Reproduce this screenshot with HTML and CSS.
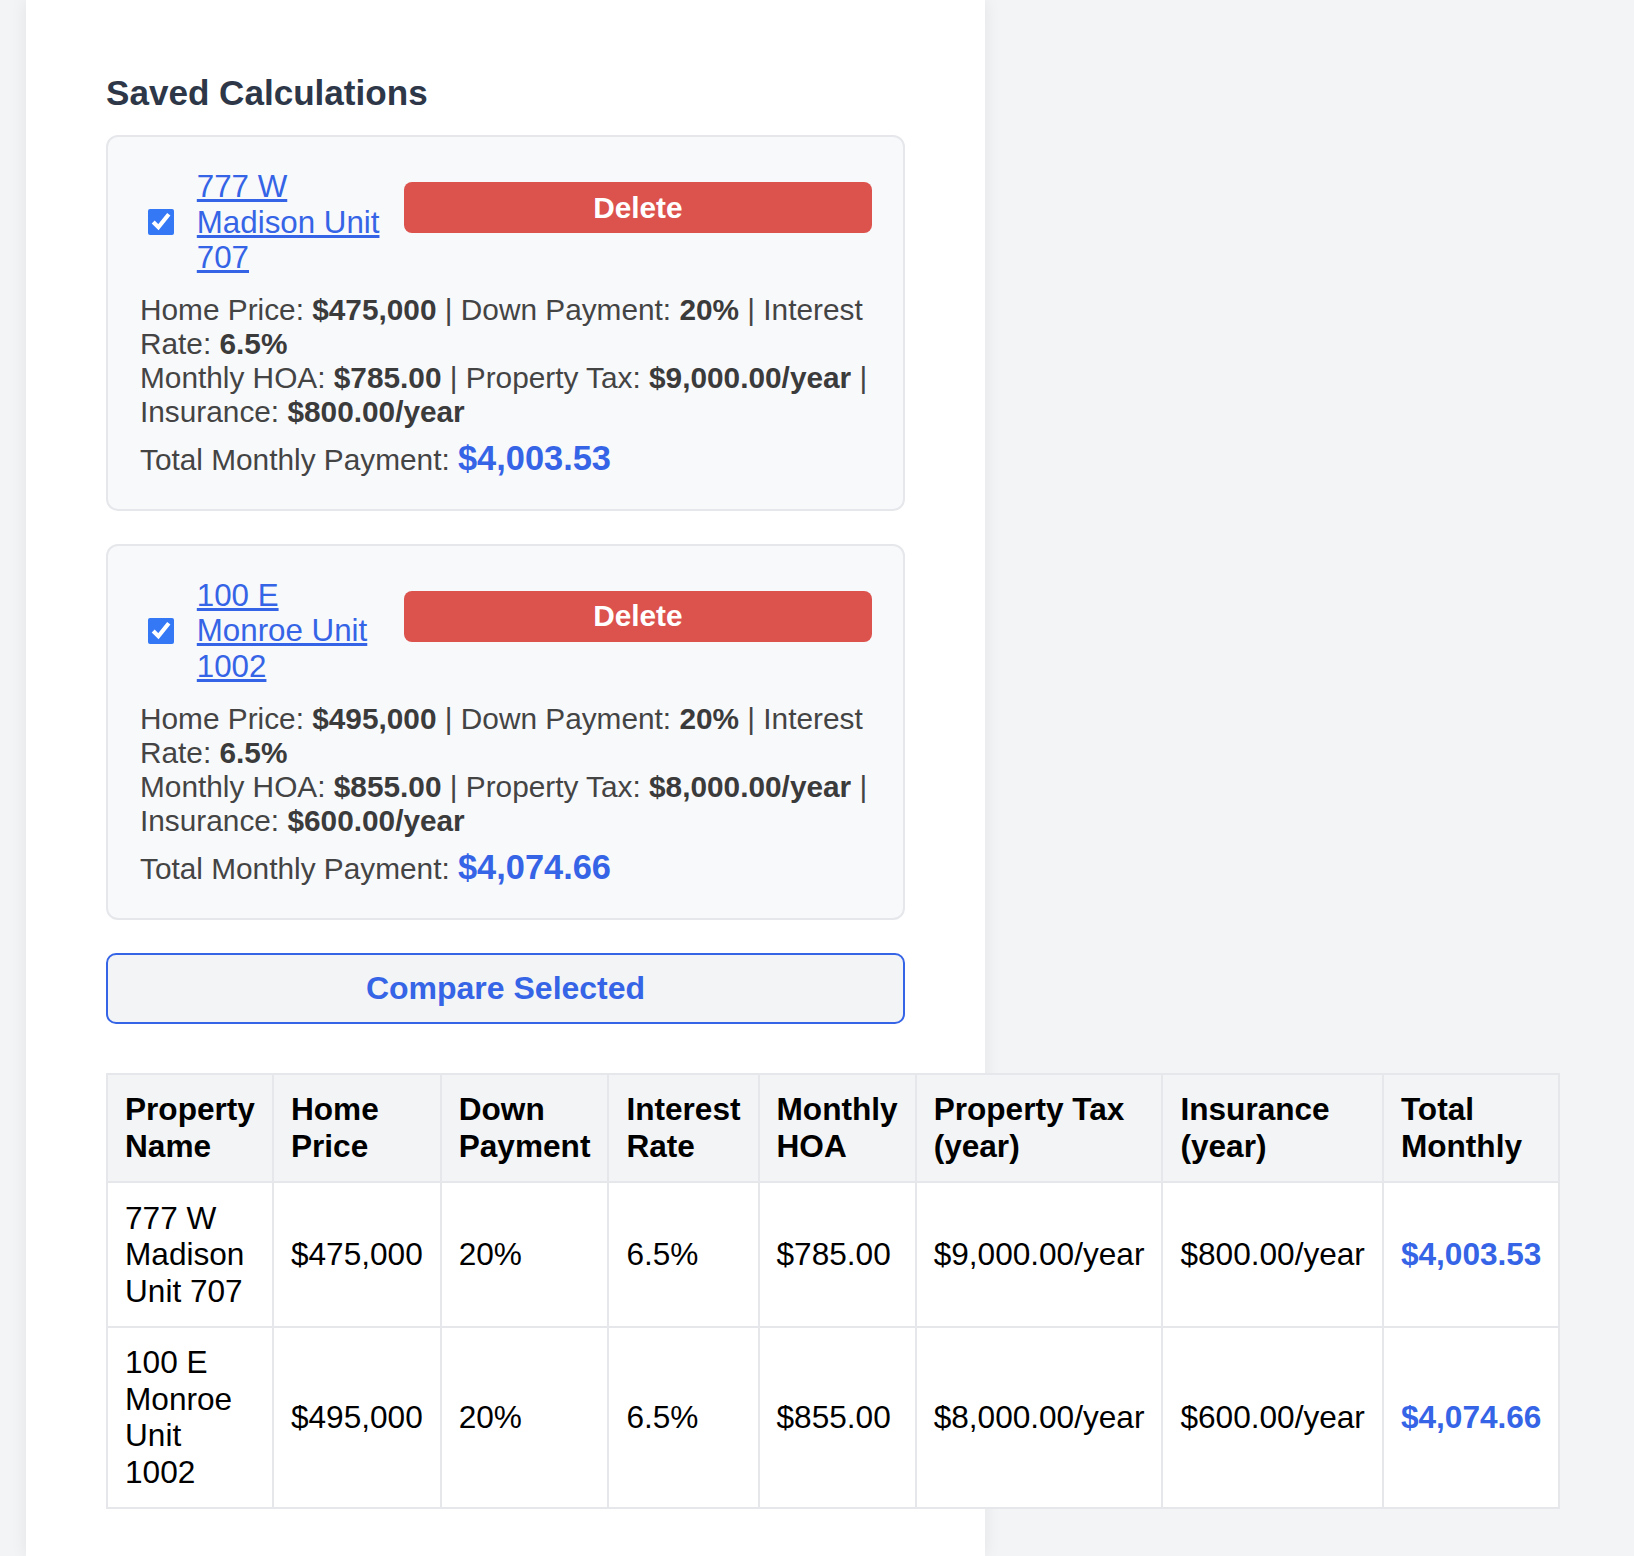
FILE: index.html
```html
<!DOCTYPE html>
<html lang="en">
<head>
<meta charset="utf-8">
<title>Saved Calculations</title>
<link rel="stylesheet" href="styles.css">
</head>
<body>
<main class="panel">
  <h2 class="title">Saved Calculations</h2>

  <div class="card">
    <div class="card-head">
      <label class="pick">
        <input type="checkbox" checked>
        <a href="#" class="prop-link">777 W Madison Unit 707</a>
      </label>
      <button class="btn-delete" type="button">Delete</button>
    </div>
    <div class="details">
      <div class="detail-line">Home Price: <strong>$475,000</strong> | Down Payment: <strong>20%</strong> | Interest Rate: <strong>6.5%</strong></div>
      <div class="detail-line">Monthly HOA: <strong>$785.00</strong> | Property Tax: <strong>$9,000.00/year</strong> | Insurance: <strong>$800.00/year</strong></div>
    </div>
    <div class="total">Total Monthly Payment: <span class="total-value">$4,003.53</span></div>
  </div>

  <div class="card">
    <div class="card-head">
      <label class="pick">
        <input type="checkbox" checked>
        <a href="#" class="prop-link">100 E Monroe Unit 1002</a>
      </label>
      <button class="btn-delete" type="button">Delete</button>
    </div>
    <div class="details">
      <div class="detail-line">Home Price: <strong>$495,000</strong> | Down Payment: <strong>20%</strong> | Interest Rate: <strong>6.5%</strong></div>
      <div class="detail-line">Monthly HOA: <strong>$855.00</strong> | Property Tax: <strong>$8,000.00/year</strong> | Insurance: <strong>$600.00/year</strong></div>
    </div>
    <div class="total">Total Monthly Payment: <span class="total-value">$4,074.66</span></div>
  </div>

  <button class="btn-compare" type="button">Compare Selected</button>

  <table class="compare-table">
    <thead>
      <tr>
        <th>Property Name</th>
        <th>Home Price</th>
        <th>Down Payment</th>
        <th>Interest Rate</th>
        <th>Monthly HOA</th>
        <th>Property Tax (year)</th>
        <th>Insurance (year)</th>
        <th>Total Monthly</th>
      </tr>
    </thead>
    <tbody>
      <tr>
        <td>777 W Madison Unit 707</td>
        <td>$475,000</td>
        <td>20%</td>
        <td>6.5%</td>
        <td>$785.00</td>
        <td>$9,000.00/year</td>
        <td>$800.00/year</td>
        <td class="cell-total">$4,003.53</td>
      </tr>
      <tr>
        <td>100 E Monroe Unit 1002</td>
        <td>$495,000</td>
        <td>20%</td>
        <td>6.5%</td>
        <td>$855.00</td>
        <td>$8,000.00/year</td>
        <td>$600.00/year</td>
        <td class="cell-total">$4,074.66</td>
      </tr>
    </tbody>
  </table>
</main>
</body>
</html>
```

FILE: styles.css
```css
html, body {
  margin: 0;
  padding: 0;
}

body {
  background: #f3f4f6;
  font-family: "Liberation Sans", Arial, Helvetica, sans-serif;
  color: #444444;
}

.panel {
  box-sizing: border-box;
  width: 959px;
  min-height: 100vh;
  margin-left: 26px;
  padding: 73.4px 80px 36px;
  background: #ffffff;
  box-shadow: 0 0 16px rgba(0, 0, 0, 0.07);
}

.title {
  margin: 0 0 21.8px;
  font-size: 35.1px;
  font-weight: 700;
  line-height: normal;
  color: #2d3748;
}

.card {
  background: #f8f9fb;
  border: 2px solid #e5e7eb;
  border-radius: 12px;
  padding: 32px 31px 31px 32px;
  margin-bottom: 33px;
}

.card-head {
  display: flex;
  align-items: flex-start;
  gap: 17px;
}

.pick {
  display: flex;
  align-items: center;
  gap: 22.5px;
  flex: none;
}

.pick input {
  width: 26px;
  height: 26px;
  margin: 0 0 0 8.3px;
  accent-color: #3478f6;
}

.prop-link {
  width: 190px;
  font-size: 31.3px;
  line-height: 35.4px;
  color: #3564e6;
  text-decoration: underline;
}

.btn-delete {
  flex: 1;
  margin-top: 13px;
  padding: 8.4px 16px;
  border: 0;
  border-radius: 8px;
  background: #dc524d;
  color: #ffffff;
  font-family: "Liberation Sans", Arial, Helvetica, sans-serif;
  font-size: 29.8px;
  font-weight: 700;
  line-height: normal;
}

.details {
  margin-top: 17.6px;
  font-size: 29.8px;
  line-height: 34px;
  color: #444444;
}

.details strong {
  color: #3b3b3b;
}

.total {
  margin-top: 10px;
  font-size: 29.8px;
  color: #444444;
}

.total-value {
  font-size: 34.4px;
  font-weight: 700;
  color: #3564e6;
}

.btn-compare {
  display: block;
  box-sizing: border-box;
  width: 100%;
  margin: 0;
  padding: 15px;
  border: 2px solid #3564e6;
  border-radius: 10px;
  background: #f3f4f6;
  color: #3564e6;
  font-family: "Liberation Sans", Arial, Helvetica, sans-serif;
  font-size: 32px;
  font-weight: 700;
  line-height: normal;
}

.compare-table {
  margin-top: 49px;
  border-collapse: collapse;
  font-size: 31.6px;
  line-height: 36.6px;
  color: #000000;
}

.compare-table th,
.compare-table td {
  border: 2px solid #e5e7eb;
  padding: 16.5px 17px;
  text-align: left;
}

.compare-table th {
  background: #f3f4f6;
  font-weight: 700;
}

.compare-table td {
  background: #ffffff;
}

.compare-table .cell-total {
  color: #3564e6;
  font-weight: 700;
}
```
